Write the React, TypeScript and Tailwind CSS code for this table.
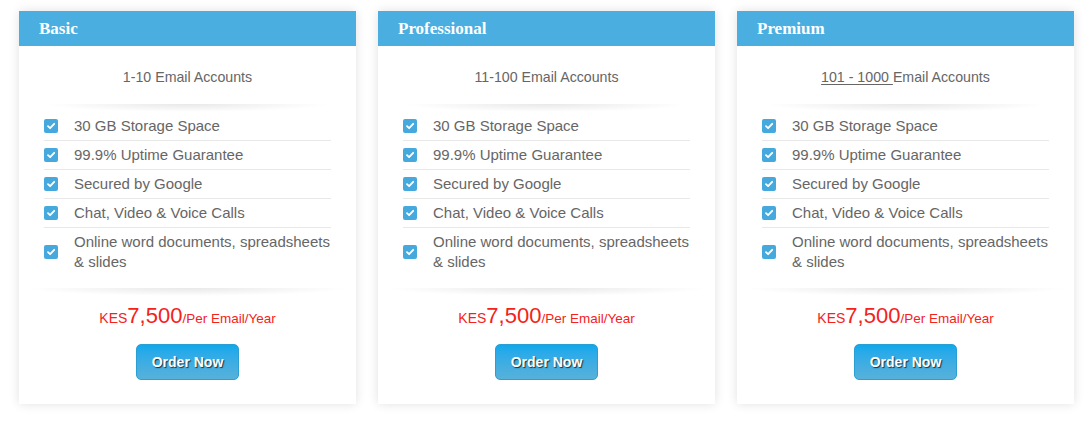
import React from "react";

type Plan = {
  name: string;
  accounts: React.ReactNode;
};

const FEATURES = [
  "30 GB Storage Space",
  "99.9% Uptime Guarantee",
  "Secured by Google",
  "Chat, Video & Voice Calls",
  "Online word documents, spreadsheets & slides",
];

const PLANS: Plan[] = [
  { name: "Basic", accounts: "1-10 Email Accounts" },
  { name: "Professional", accounts: "11-100 Email Accounts" },
  {
    name: "Premium",
    accounts: (
      <>
        <span className="underline underline-offset-2">101 - 1000 </span>Email Accounts
      </>
    ),
  },
];

function CheckBox() {
  return (
    <span className="flex h-[14px] w-[14px] shrink-0 items-center justify-center rounded-[2px] bg-[#45a9de]">
      <svg width="10" height="10" viewBox="0 0 10 10" fill="none">
        <path d="M2 5.2 L4.1 7.2 L8.2 2.8" stroke="white" strokeWidth="1.8" strokeLinecap="round" strokeLinejoin="round" />
      </svg>
    </span>
  );
}

function Divider() {
  return <div className="h-[8px] bg-[radial-gradient(ellipse_at_top,rgba(0,0,0,0.09),rgba(0,0,0,0)_70%)]" />;
}

function PlanCard({ plan }: { plan: Plan }) {
  return (
    <div className="w-[337px] shrink-0 bg-white shadow-[0_0_10px_rgba(0,0,0,0.12)]">
      <div className="flex h-[35px] items-center bg-[#4aaee0] px-5">
        <span className="font-['Liberation_Serif',serif] text-[17px] font-bold text-white">{plan.name}</span>
      </div>
      <div className="pt-[21px] pb-[24px]">
        <p className="text-center text-[14.2px] leading-5 text-[#666]">{plan.accounts}</p>
        <div className="mx-[25px] mt-[17px]">
          <Divider />
          <ul>
            {FEATURES.map((f, i) => (
              <li
                key={f}
                className={`flex items-center gap-4 py-1 text-[15px] leading-5 text-[#666] ${
                  i < FEATURES.length - 1 ? "border-b border-[#e8e8e8]" : ""
                }`}
              >
                <CheckBox />
                <span>{f}</span>
              </li>
            ))}
          </ul>
        </div>
        <div className="mx-[6px] mt-[12px]">
          <Divider />
        </div>
        <p className="mt-[6px] text-center leading-[28px] text-[#f5221b]">
          <span className="text-[14px]">KES</span>
          <span className="text-[22px]">7,500</span>
          <span className="text-[13.5px]">/Per Email/Year</span>
        </p>
        <div className="mt-[11px] flex justify-center">
          <button className="h-[36px] w-[103px] rounded-[5px] border border-[#2a9fd3] bg-gradient-to-b from-[#0da8ec] to-[#56b1da] text-[14px] font-bold text-white [text-shadow:1px_1px_1px_rgba(0,0,0,0.7)]">
            Order Now
          </button>
        </div>
      </div>
    </div>
  );
}

export default function App() {
  return (
    <div className="flex h-[428px] w-[1086px] items-start gap-[22px] overflow-hidden bg-white pl-[19px] pt-[11px] font-['Liberation_Sans',Arial,sans-serif]">
      {PLANS.map((p) => (
        <PlanCard key={p.name} plan={p} />
      ))}
    </div>
  );
}
